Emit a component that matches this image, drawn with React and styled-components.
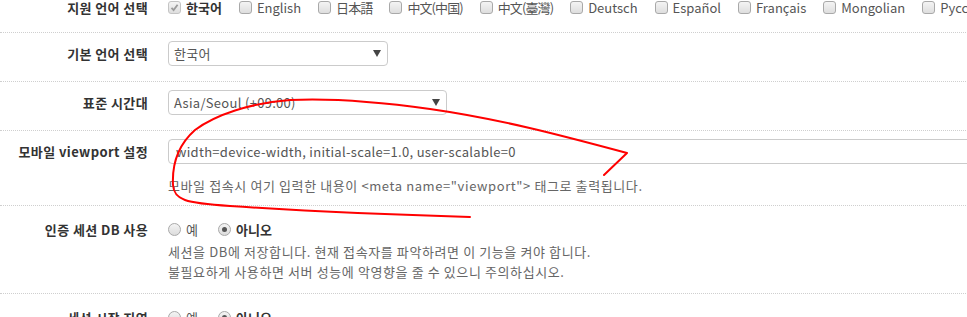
import React from "react";
import styled, { createGlobalStyle } from "styled-components";

const Global = createGlobalStyle`
  html, body { margin: 0; padding: 0; background: #fff; overflow: hidden; }
  body { font-family: "Noto Sans CJK KR", "Noto Sans", sans-serif; font-size: 13px; color: #333; }
`;

const Page = styled.div`
  position: relative;
  width: 967px;
  height: 317px;
  overflow: hidden;
`;

const Form = styled.div`
  margin-top: -13px;
  width: 1200px;
`;

const Row = styled.div`
  display: grid;
  grid-template-columns: 148px 1fr;
  column-gap: 20px;
  padding: 8px 0;
  border-bottom: 1px dotted #cfcfcf;
`;

const Label = styled.div`
  text-align: right;
  font-weight: bold;
  line-height: 25px;
  letter-spacing: 0.4px;
  margin-top: ${(p) => p.$offset || 0}px;
  white-space: nowrap;
  color: #333;
`;

const Field = styled.div`
  display: flex;
  flex-direction: column;
  min-width: 0;
`;

const OptionList = styled.div`
  display: flex;
  align-items: center;
  gap: 17px;
  height: 25px;
  margin-bottom: 4px;
  white-space: nowrap;
`;

const RadioList = styled(OptionList)`
  gap: 20px;
  margin: 3px 0 0;
`;

const Option = styled.label`
  display: inline-flex;
  align-items: center;
  gap: 5px;
  color: ${(p) => (p.$on ? "#333" : "#555")};
  font-weight: ${(p) => (p.$on ? "bold" : "normal")};
  letter-spacing: ${(p) => (p.$cjk ? "-0.9px" : "0")};
`;

const Box = styled.span`
  width: 11px;
  height: 11px;
  border: 1px solid ${(p) => (p.$disabled ? "#c4c4c4" : "#a9a9a9")};
  border-radius: 3px;
  background: linear-gradient(#f4f4f4, #dedede);
  display: inline-flex;
  align-items: center;
  justify-content: center;
  flex: none;
`;

const Round = styled.span`
  width: 11px;
  height: 11px;
  border: 1px solid #a9a9a9;
  border-radius: 50%;
  background: linear-gradient(#f4f4f4, #dcdcdc);
  display: inline-flex;
  align-items: center;
  justify-content: center;
  flex: none;
  &::after {
    content: "";
    display: ${(p) => (p.$on ? "block" : "none")};
    width: 5px;
    height: 5px;
    border-radius: 50%;
    background: #555;
  }
`;

const Select = styled.div`
  width: ${(p) => p.$w}px;
  height: 25px;
  box-sizing: border-box;
  border: 1px solid #cbcbcb;
  border-radius: 4px;
  display: flex;
  align-items: center;
  justify-content: space-between;
  padding: 0 6px 0 5px;
  color: #555;
  letter-spacing: 0.3px;
  margin-bottom: 7px;
`;

const Caret = styled.span`
  width: 0;
  height: 0;
  border-left: 4px solid transparent;
  border-right: 4px solid transparent;
  border-top: 7px solid #444;
`;

const TextInput = styled.div`
  width: 900px;
  height: 25px;
  box-sizing: border-box;
  border: 1px solid #cbcbcb;
  border-radius: 4px;
  padding: 0 7px;
  display: flex;
  align-items: center;
  color: #555;
  letter-spacing: 0.3px;
  white-space: nowrap;
`;

const Help = styled.div`
  color: #666;
  line-height: 20px;
  letter-spacing: 0.6px;
  margin-top: ${(p) => p.$top || 0}px;
  margin-bottom: ${(p) => p.$bottom || 0}px;
  white-space: nowrap;
`;

const Scribble = styled.svg`
  position: absolute;
  left: 0;
  top: 0;
  pointer-events: none;
`;

const Check = () => (
  <svg width="9" height="9" viewBox="0 0 9 9">
    <path d="M1.5 4.8 L3.6 7 L7.6 1.8" fill="none" stroke="#9a9a9a" strokeWidth="1.8" />
  </svg>
);

const langs = [
  ["한국어", true],
  ["English"],
  ["日本語", false, true],
  ["中文(中国)", false, true],
  ["中文(臺灣)", false, true],
  ["Deutsch"],
  ["Español"],
  ["Français"],
  ["Mongolian"],
  ["Русский"],
];

const Radios = () => (
  <RadioList>
    <Option>
      <Round />
      예
    </Option>
    <Option $on>
      <Round $on />
      아니오
    </Option>
  </RadioList>
);

export default function App() {
  return (
    <Page>
      <Global />
      <Form>
        <Row>
          <Label>지원 언어 선택</Label>
          <Field>
            <OptionList>
              {langs.map(([name, on, cjk]) => (
                <Option key={name} $on={on} $cjk={cjk}>
                  <Box $disabled={on}>{on && <Check />}</Box>
                  {name}
                </Option>
              ))}
            </OptionList>
          </Field>
        </Row>
        <Row>
          <Label>기본 언어 선택</Label>
          <Field>
            <Select $w={220}>
              한국어
              <Caret />
            </Select>
          </Field>
        </Row>
        <Row>
          <Label>표준 시간대</Label>
          <Field>
            <Select $w={279}>
              Asia/Seoul (+09:00)
              <Caret />
            </Select>
          </Field>
        </Row>
        <Row>
          <Label>모바일 viewport 설정</Label>
          <Field>
            <TextInput>width=device-width, initial-scale=1.0, user-scalable=0</TextInput>
            <Help $top={12} $bottom={1}>
              모바일 접속시 여기 입력한 내용이 &lt;meta name="viewport"&gt; 태그로 출력됩니다.
            </Help>
          </Field>
        </Row>
        <Row>
          <Label $offset={3}>인증 세션 DB 사용</Label>
          <Field>
            <Radios />
            <Help $bottom={3}>
              세션을 DB에 저장합니다. 현재 접속자를 파악하려면 이 기능을 켜야 합니다.
              <br />
              불필요하게 사용하면 서버 성능에 악영향을 줄 수 있으니 주의하십시오.
            </Help>
          </Field>
        </Row>
        <Row>
          <Label $offset={3}>세션 시작 지연</Label>
          <Field>
            <Radios />
          </Field>
        </Row>
      </Form>
      <Scribble width="967" height="317" viewBox="0 0 967 317">
        <path
          d="M604 175 L627 153 C560 135 500 119 430 109 C380 102 330 98 290 100 C250 103 215 115 195 130 C178 145 172 165 173 185 C174 200 185 203 230 206 C320 212 400 215 470 217"
          fill="none"
          stroke="#ff0000"
          strokeWidth="2"
          strokeLinecap="round"
          strokeLinejoin="round"
        />
      </Scribble>
    </Page>
  );
}
